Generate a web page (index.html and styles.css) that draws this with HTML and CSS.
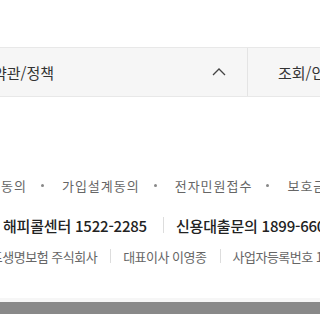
FILE: index.html
```html
<!DOCTYPE html>
<html lang="ko">
<head>
<meta charset="utf-8">
<link rel="stylesheet" href="styles.css">
</head>
<body>
<div class="footer">
  <div class="menu">
    <div class="menu-cell menu-policy">
      <span class="menu-label">약관/정책</span>
      <svg class="chev" width="14" height="8" viewBox="0 0 14 8"><path d="M1 7 L7 1 L13 7" fill="none" stroke="#444" stroke-width="1.3"/></svg>
    </div>
    <div class="menu-cell menu-info">
      <span class="menu-label">조회/안내</span>
    </div>
  </div>
  <div class="links">
    <span class="link">동의</span><span class="dot"></span>
    <span class="link">가입설계동의</span><span class="dot"></span>
    <span class="link">전자민원접수</span><span class="dot"></span>
    <span class="link">보호금융상품</span>
  </div>
  <div class="phones">
    <span class="phone">해피콜센터 1522-2285</span><span class="vbar"></span>
    <span class="phone">신용대출문의 1899-6600</span>
  </div>
  <div class="company">
    <span class="info">신한라이프생명보험 주식회사</span><span class="vbar small"></span>
    <span class="info">대표이사 이영종</span><span class="vbar small"></span>
    <span class="info">사업자등록번호 110-81-00000</span>
  </div>
  <div class="bottom-line"></div>
  <div class="bottom-bar"></div>
</div>
</body>
</html>
```
FILE: styles.css
```css
html, body {
  margin: 0;
  padding: 0;
  width: 320px;
  height: 314px;
  overflow: hidden;
  background: #fff;
}
body {
  font-family: "Noto Sans CJK KR", "Noto Sans", sans-serif;
}
.footer {
  width: 320px;
  overflow: hidden;
  padding-top: 47px;
}
.menu {
  display: flex;
  width: 700px;
  margin-left: -44px;
  height: 48px;
  background: #f6f6f6;
  border-top: 1px solid #e8e8e8;
  border-bottom: 1px solid #e8e8e8;
}
.menu-cell {
  display: flex;
  align-items: center;
  box-sizing: border-box;
}
.menu-policy {
  width: 292px;
  padding-left: 37px;
  padding-right: 21px;
  justify-content: space-between;
  border-right: 1px solid #e4e4e4;
}
.menu-info {
  padding-left: 30px;
}
.menu-label {
  font-size: 15px;
  color: #333;
}
.chev {
  display: block;
  margin-top: -1px;
}
.links {
  display: flex;
  align-items: center;
  white-space: nowrap;
  margin-top: 78px;
  padding-left: 1px;
  height: 20px;
  font-size: 13px;
  color: #666;
}
.link {
  letter-spacing: 1px;
}
.dot {
  width: 3px;
  height: 3px;
  border-radius: 50%;
  background: #888;
  margin: 0 18px 0 14px;
  flex: none;
}
.phones {
  display: flex;
  align-items: center;
  white-space: nowrap;
  margin-top: 19px;
  padding-left: 3px;
  height: 22px;
  font-size: 15px;
  font-weight: 500;
  color: #222;
}
.phone {
  letter-spacing: -0.2px;
}
.vbar {
  width: 1px;
  height: 16px;
  background: #ddd;
  margin: 0 12px 0 16px;
  flex: none;
}
.company {
  display: flex;
  align-items: center;
  white-space: nowrap;
  margin-top: 10px;
  margin-left: -55px;
  height: 20px;
  font-size: 13px;
  color: #666;
}
.info {
  letter-spacing: -0.5px;
}
.vbar.small {
  height: 14px;
  margin: 0 12px 0 13px;
}
.bottom-line {
  margin-top: 32px;
  height: 4px;
  background: #f6f6f6;
}
.bottom-bar {
  height: 20px;
  background: #898989;
}
```
